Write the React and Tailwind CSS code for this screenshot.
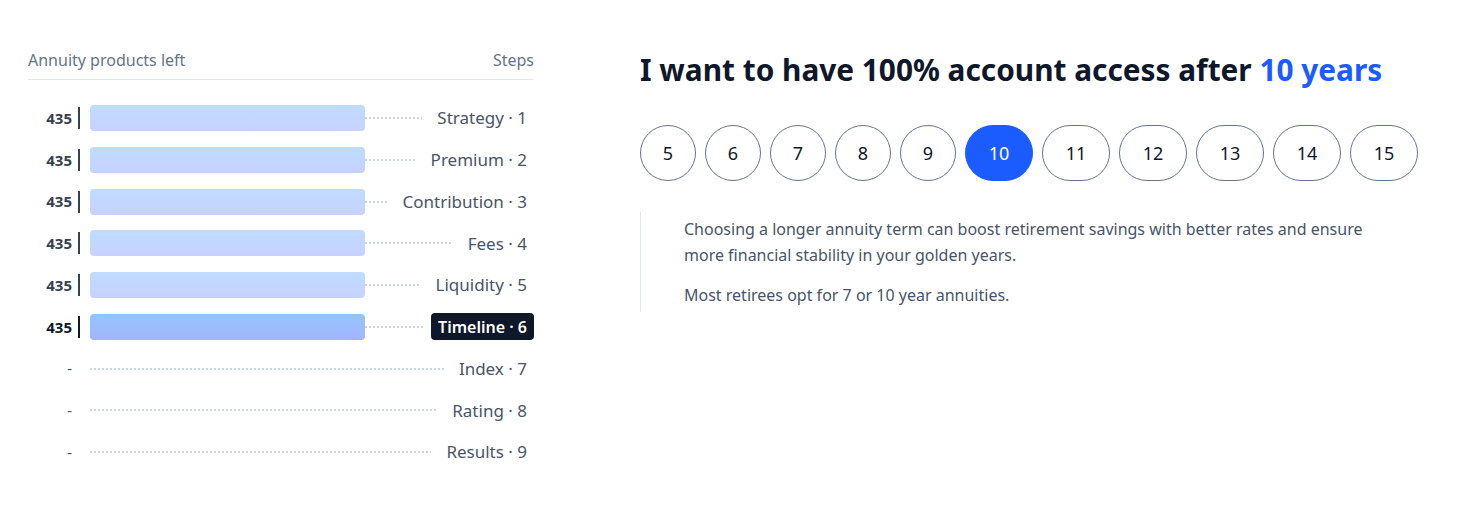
import React from 'react';

const STEPS = [
  { name: 'Strategy', count: 435 },
  { name: 'Premium', count: 435 },
  { name: 'Contribution', count: 435 },
  { name: 'Fees', count: 435 },
  { name: 'Liquidity', count: 435 },
  { name: 'Timeline', count: 435, active: true },
  { name: 'Index' },
  { name: 'Rating' },
  { name: 'Results' },
];

const YEARS = [5, 6, 7, 8, 9, 10, 11, 12, 13, 14, 15];
const SELECTED = 10;

function Dots() {
  return (
    <div className="flex-1 h-[2px] bg-[linear-gradient(to_right,#cbd5e1_2px,transparent_2px)] bg-[length:4px_2px] bg-repeat-x" />
  );
}

function StepRow({ step, index }) {
  const hasCount = step.count != null;
  return (
    <div className="flex items-center h-[26px]">
      {/* count + tick */}
      <div className="w-[52px] flex items-center justify-end">
        {hasCount ? (
          <>
            <span className={`text-[15px] font-bold tabular-nums ${step.active ? 'text-[#111827]' : 'text-[#374151]'}`}>
              {step.count}
            </span>
            <span className={`ml-[6px] w-[2px] h-[22px] ${step.active ? 'bg-[#111827]' : 'bg-[#374151]'}`} />
          </>
        ) : (
          <span className="text-[15px] text-[#475569] mr-[8px]">-</span>
        )}
      </div>

      {/* bar */}
      {hasCount && (
        <div
          className={`ml-[10px] w-[275px] h-[26px] rounded-[4px] ${
            step.active
              ? 'bg-[linear-gradient(to_bottom,#93c5fd,#a5b4fc)]'
              : 'bg-[linear-gradient(to_bottom,#bfdbfe,#c7d2fe)]'
          }`}
        />
      )}

      <div className={`flex-1 flex items-center ${hasCount ? '' : 'ml-[10px]'}`}>
        <Dots />
        <span
          className={`ml-[8px] px-[7px] h-[27px] flex items-center rounded-[4px] whitespace-nowrap ${
            step.active ? 'bg-[#0f172a] text-white font-semibold text-[16px]' : 'text-[#475569] text-[17px]'
          }`}
        >
          {step.name} · {index + 1}
        </span>
      </div>
    </div>
  );
}

export default function App() {
  return (
    <div className="w-[1477px] h-[519px] bg-white flex font-['Noto_Sans','Liberation_Sans',sans-serif]">
      {/* Left: funnel */}
      <div className="ml-[28px] w-[506px] pt-[48px]">
        <div className="flex justify-between items-center pb-[7px] border-b border-[#e2e8f0] text-[16px] text-[#64748b]">
          <span>Annuity products left</span>
          <span>Steps</span>
        </div>
        <div className="mt-[25px] flex flex-col gap-[15.75px]">
          {STEPS.map((s, i) => (
            <StepRow key={s.name} step={s} index={i} />
          ))}
        </div>
      </div>

      {/* Right: question */}
      <div className="ml-[106px] pt-[50px]">
        <h1 className="text-[29.8px] font-bold text-[#0f172a] leading-[40px]">
          I want to have 100% account access after <span className="text-[#1a5cff]">10 years</span>
        </h1>

        <div className="mt-[35px] flex gap-[9px]">
          {YEARS.map((y) => (
            <button
              key={y}
              className={`h-[56px] rounded-full border text-[18px] flex items-center justify-center ${
                y < 10 ? 'w-[56px]' : 'w-[68px]'
              } ${
                y === SELECTED
                  ? 'bg-[#1a5cff] border-[#1a5cff] text-white'
                  : 'border-[#64748b] text-[#0f172a]'
              }`}
            >
              {y}
            </button>
          ))}
        </div>

        <div className="mt-[31px] border-l border-[#e2e8f0] pl-[43px] py-[4px] w-[760px] text-[16px] leading-[26px] text-[#475569]">
          <p>
            Choosing a longer annuity term can boost retirement savings with better rates and ensure
            more financial stability in your golden years.
          </p>
          <p className="mt-[14px]">Most retirees opt for 7 or 10 year annuities.</p>
        </div>
      </div>
    </div>
  );
}
